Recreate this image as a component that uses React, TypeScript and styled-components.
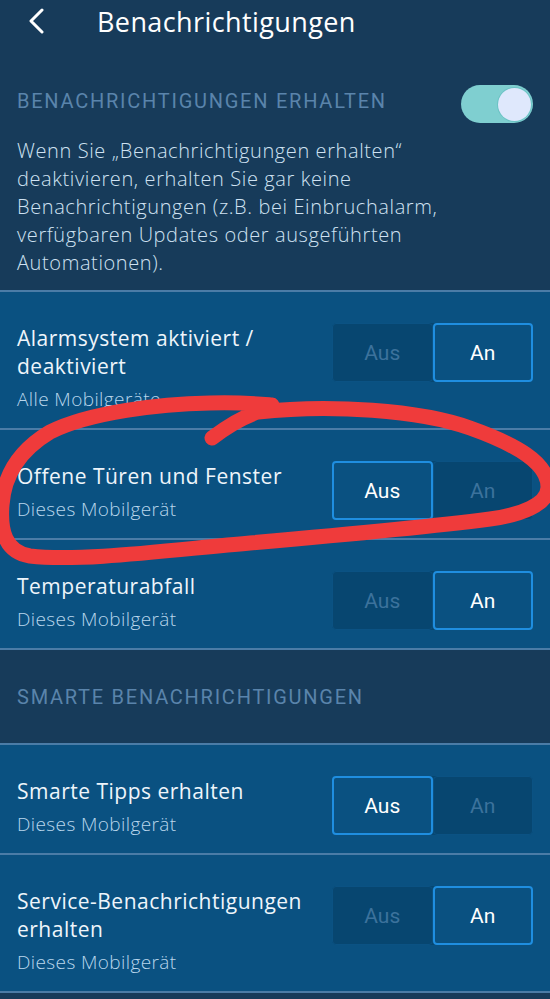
import React from "react";
import styled, { createGlobalStyle } from "styled-components";

const GlobalStyle = createGlobalStyle`
  html, body { margin: 0; padding: 0; background: #173b5a; }
  body { font-family: "Open Sans", "Noto Sans", sans-serif; -webkit-font-smoothing: antialiased; }
  * { box-sizing: border-box; }
`;

const Page = styled.div`
  position: relative;
  width: 550px;
  min-height: 999px;
  background: #173b5a;
  display: flex;
  flex-direction: column;
  overflow: hidden;
`;

const Header = styled.header`
  height: 42px;
  display: flex;
  align-items: center;
  padding-left: 26px;
  gap: 52px;
`;

const BackButton = styled.button`
  width: 19px;
  height: 42px;
  padding: 0;
  border: none;
  background: none;
  display: flex;
  align-items: center;
  justify-content: center;
  margin-top: -1px;
`;

const HeaderTitle = styled.h1`
  margin: 0;
  font-family: "Open Sans", sans-serif;
  font-weight: 500;
  font-size: 27px;
  color: #ffffff;
  letter-spacing: 0.4px;
`;

const Master = styled.section`
  padding: 40px 17px 13px;
`;

const MasterRow = styled.div`
  display: flex;
  align-items: flex-start;
  justify-content: space-between;
`;

const SectionLabel = styled.div`
  font-family: Roboto, "Liberation Sans", sans-serif;
  font-size: 20px;
  line-height: 38px;
  letter-spacing: 1.75px;
  color: #5a84ab;
  text-transform: uppercase;
`;

const Toggle = styled.div<{ $on: boolean }>`
  margin-top: 3px;
  width: 72px;
  height: 38px;
  border-radius: 19px;
  background: ${(p) => (p.$on ? "#7fcfd0" : "#4a6b88")};
  display: flex;
  align-items: center;
  justify-content: ${(p) => (p.$on ? "flex-end" : "flex-start")};
  padding: 0 2px;
`;

const Knob = styled.div`
  width: 33px;
  height: 33px;
  border-radius: 50%;
  background: #dfe8fc;
  box-shadow: 0 0 0 1px #6cc3c5;
`;

const Description = styled.p`
  margin: 14px 0 0;
  font-family: "Open Sans", sans-serif;
  font-weight: 300;
  font-size: 20px;
  line-height: 28px;
  letter-spacing: 0.6px;
  color: #cfe2f2;
`;

const Row = styled.div`
  display: flex;
  justify-content: space-between;
  align-items: flex-start;
  gap: 12px;
  border-top: 2px solid #4b7ca7;
  background: #0a5181;
  padding: 32px 17px 14px;
`;

const RowText = styled.div`
  display: flex;
  flex-direction: column;
  flex: 1;
`;

const RowTitle = styled.div`
  font-family: "Open Sans", sans-serif;
  font-weight: 500;
  font-size: 21px;
  line-height: 28px;
  letter-spacing: 0.5px;
  color: #eef5fb;
  white-space: nowrap;
`;

const RowSub = styled.div`
  margin-top: 4px;
  font-family: "Open Sans", sans-serif;
  font-weight: 300;
  font-size: 19px;
  line-height: 30px;
  letter-spacing: 0.4px;
  color: #b9d6ec;
  white-space: nowrap;
`;

const Segmented = styled.div`
  flex: 0 0 201px;
  height: 59px;
  display: grid;
  grid-template-columns: 1fr 1fr;
  border-radius: 5px;
  background: #074670;
  margin-top: -1px;
`;

const Segment = styled.div<{ $active: boolean }>`
  display: flex;
  align-items: center;
  justify-content: center;
  border-radius: 4px;
  font-family: Roboto, "Liberation Sans", sans-serif;
  font-size: 21px;
  color: ${(p) => (p.$active ? "#ffffff" : "#3c729c")};
  background: ${(p) => (p.$active ? "#0a5181" : "#074670")};
  border: ${(p) => (p.$active ? "2px solid #1f8ee0" : "1px solid #0b5283")};
`;

const GroupHeader = styled.div`
  border-top: 2px solid #4b7ca7;
  background: #173b5a;
  padding: 35px 17px 34px;
  font-family: Roboto, "Liberation Sans", sans-serif;
  font-size: 20px;
  line-height: 24px;
  letter-spacing: 1.75px;
  color: #5a84ab;
  text-transform: uppercase;
`;

const EndLine = styled.div`
  border-top: 2px solid #4b7ca7;
  flex: 1;
  background: #173b5a;
`;

const Annotation = styled.svg`
  position: absolute;
  left: 0;
  top: 0;
  pointer-events: none;
`;

type Item = { title: string[]; sub: string; on: boolean };

const SettingRow = ({ item }: { item: Item }) => (
  <Row>
    <RowText>
      {item.title.map((t) => (
        <RowTitle key={t}>{t}</RowTitle>
      ))}
      <RowSub>{item.sub}</RowSub>
    </RowText>
    <Segmented>
      <Segment $active={!item.on}>Aus</Segment>
      <Segment $active={item.on}>An</Segment>
    </Segmented>
  </Row>
);

const first: Item[] = [
  { title: ["Alarmsystem aktiviert /", "deaktiviert"], sub: "Alle Mobilgeräte", on: true },
  { title: ["Offene Türen und Fenster"], sub: "Dieses Mobilgerät", on: false },
  { title: ["Temperaturabfall"], sub: "Dieses Mobilgerät", on: true },
];

const second: Item[] = [
  { title: ["Smarte Tipps erhalten"], sub: "Dieses Mobilgerät", on: false },
  { title: ["Service-Benachrichtigungen", "erhalten"], sub: "Dieses Mobilgerät", on: true },
];

const descLines = [
  "Wenn Sie „Benachrichtigungen erhalten“",
  "deaktivieren, erhalten Sie gar keine",
  "Benachrichtigungen (z.B. bei Einbruchalarm,",
  "verfügbaren Updates oder ausgeführten",
  "Automationen).",
];

export default function App() {
  return (
    <>
      <GlobalStyle />
      <Page>
        <Header>
          <BackButton aria-label="Zurück">
            <svg width="16" height="26" viewBox="0 0 16 26">
              <path d="M14 2 L3 13 L14 24" fill="none" stroke="#fff" strokeWidth="3" strokeLinecap="round" strokeLinejoin="round" />
            </svg>
          </BackButton>
          <HeaderTitle>Benachrichtigungen</HeaderTitle>
        </Header>
        <Master>
          <MasterRow>
            <SectionLabel>Benachrichtigungen erhalten</SectionLabel>
            <Toggle $on>
              <Knob />
            </Toggle>
          </MasterRow>
          <Description>
            {descLines.map((l, i) => (
              <React.Fragment key={i}>
                {l}
                {i < descLines.length - 1 && <br />}
              </React.Fragment>
            ))}
          </Description>
        </Master>
        {first.map((it) => (
          <SettingRow key={it.title[0]} item={it} />
        ))}
        <GroupHeader>Smarte Benachrichtigungen</GroupHeader>
        {second.map((it) => (
          <SettingRow key={it.title[0]} item={it} />
        ))}
        <EndLine />
        <Annotation width="550" height="999" viewBox="0 0 550 999">
          <path
            d="M212 438 C225 428 240 418 258 412 C330 404 420 410 470 428 C515 444 548 462 548 487 C548 505 520 515 490 519 C420 528 330 536 250 543 C170 550 80 562 30 556 C5 552 0 530 2 505 C4 475 20 450 50 432 C90 412 160 404 210 403 C240 402 260 404 272 405"
            fill="none"
            stroke="#ef3b3b"
            strokeWidth="15"
            strokeLinecap="round"
            strokeLinejoin="round"
          />
        </Annotation>
      </Page>
    </>
  );
}
